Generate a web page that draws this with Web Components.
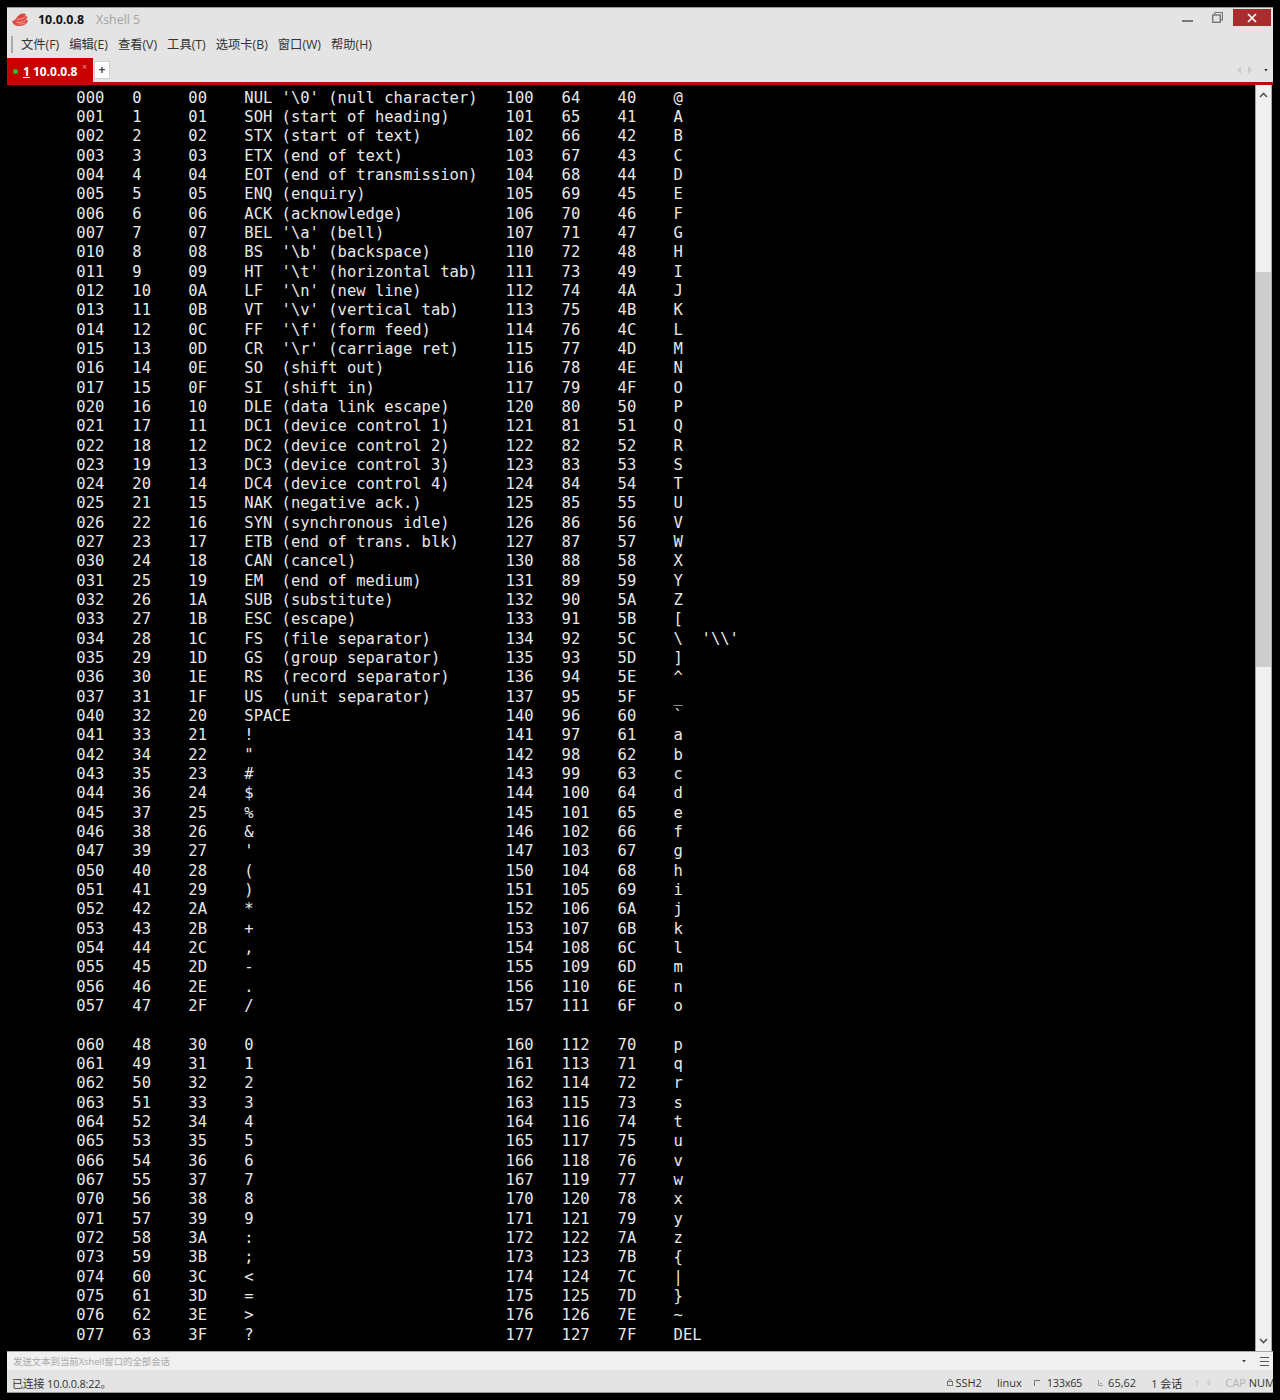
<!DOCTYPE html>
<html>
<head>
<meta charset="utf-8">
<title>10.0.0.8 - Xshell 5</title>
<style>
    html, body { margin: 0; background: #000; }
    body { padding: 7px 7px 0 7px; height: 1400px; box-sizing: border-box; font-family: "Open Sans", "Noto Sans CJK SC", sans-serif; }
</style>
</head>
<body>
<xshell-window>
    <title-bar host="10.0.0.8" app="Xshell 5"></title-bar>
    <menu-bar></menu-bar>
    <tab-bar></tab-bar>
    <term-view></term-view>
    <compose-bar></compose-bar>
    <status-bar></status-bar>
</xshell-window>

<script>
class XshellWindow extends HTMLElement {
    constructor() {
        super();
        this.attachShadow({mode: 'open'}).innerHTML = `
            <style>
                :host {
                    display: flex;
                    flex-direction: column;
                    height: 1386px;
                    width: 1266px;
                    box-sizing: border-box;
                    border-top: 1px solid #9a9a9a;
                    border-bottom: 1px solid #9a9a9a;
                    background: #e4e4e4;
                    overflow: hidden;
                }
            </style>
            <slot></slot>
        `;
    }
}

class TitleBar extends HTMLElement {
    constructor() {
        super();
        this.attachShadow({mode: 'open'});
    }
    connectedCallback() {
        this.shadowRoot.innerHTML = `
            <style>
                :host { display: flex; align-items: flex-start; height: 23px; flex: none; color: #111; }
                .logo { margin: 5px 0 0 5px; width: 16px; height: 13px; flex: none; }
                .host { margin: 3px 0 0 10px; font-size: 12.4px; font-weight: 700; line-height: 18px; }
                .app { margin: 3px 0 0 12px; font-size: 12.4px; color: #a2a2a2; line-height: 18px; }
                .btns { margin-left: auto; display: flex; align-items: flex-start; }
                .min { width: 11px; height: 2px; background: #777; margin: 12px 0 0 0; }
                .restore { margin: 4px 0 0 19px; width: 11px; height: 11px; }
                .close { margin: 1px 2px 0 10px; width: 38px; height: 17px; background: #a92c2f; display: flex; align-items: center; justify-content: center; }
            </style>
            <svg class="logo" viewBox="0 0 16 13">
                <path d="M0 8C3 8 4 5 6 3 8 0 12 0 14 1L13 3 16 4 14 6 16 8C15 11 11 13 7 13 3 13 1 11 0 8z" fill="#dd4a46"/>
                <path d="M5 6c2 1 5 0 8-2M4 9c3 1 7 0 10-2M6 11c2 0 5 0 7-1" stroke="#f4aaa4" stroke-width=".9" fill="none"/>
            </svg>
            <span class="host">${this.getAttribute('host')}</span>
            <span class="app">${this.getAttribute('app')}</span>
            <div class="btns">
                <div class="min"></div>
                <svg class="restore" viewBox="0 0 11 11" fill="none" stroke="#777">
                    <path d="M3 2.5V.5h7.5v7.5h-1.5" stroke-width="1.2"/>
                    <rect x=".7" y="3" width="7.6" height="7.3" stroke-width="1.4"/>
                </svg>
                <div class="close">
                    <svg width="10" height="10" viewBox="0 0 10 10"><path d="M1 1l8 8M9 1l-8 8" stroke="#fff" stroke-width="1.7"/></svg>
                </div>
            </div>
        `;
    }
}

class MenuBar extends HTMLElement {
    constructor() {
        super();
        const items = ['文件(F)', '编辑(E)', '查看(V)', '工具(T)', '选项卡(B)', '窗口(W)', '帮助(H)'];
        this.attachShadow({mode: 'open'}).innerHTML = `
            <style>
                :host { display: flex; align-items: center; height: 26px; flex: none; padding-left: 4px; font-size: 12.3px; color: #333; }
                .grip { width: 2px; height: 17px; background: #aaa; margin-right: 8px; }
                .items { display: flex; gap: 10px; }
            </style>
            <div class="grip"></div>
            <div class="items">${items.map(m => `<span>${m}</span>`).join('')}</div>
        `;
    }
}

class TabBar extends HTMLElement {
    constructor() {
        super();
        this.attachShadow({mode: 'open'}).innerHTML = `
            <style>
                :host { display: flex; height: 28px; flex: none; box-sizing: border-box; border-bottom: 3px solid #c4090d; align-items: flex-end; position: relative; }
                .tab { width: 86px; height: 24px; background: #c80000; color: #fff; display: flex; align-items: center; box-sizing: border-box; padding: 3px 0 0 6px; font-size: 12px; font-weight: 700; position: relative; }
                .dot { width: 5px; height: 5px; border-radius: 50%; background: #22c022; margin-right: 5px; }
                .num { text-decoration: underline; margin-right: 3px; }
                .x { position: absolute; left: 75px; top: 3px; font-size: 9px; font-weight: 400; color: #e09a9a; line-height: 12px; }
                .add { width: 14px; height: 16px; margin: 0 0 3px 1px; background: #fff; border: 1px solid #d2d2d2; color: #444; font-size: 12px; font-weight: 700; display: flex; align-items: center; justify-content: center; line-height: 1; }
                .nav { margin-left: auto; margin-bottom: 8px; display: flex; align-items: center; gap: 7px; padding-right: 5px; }
                .arrow { width: 0; height: 0; border: 4px solid transparent; }
                .l { border-right: 4px solid #cbcbcb; border-left-width: 0; }
                .r { border-left: 4px solid #cbcbcb; border-right-width: 0; }
                .drop { margin-left: 5px; width: 4px; height: 3px; background: #333; clip-path: polygon(0 0, 100% 0, 50% 100%); }
            </style>
            <div class="tab"><span class="dot"></span><span class="num">1</span><span>10.0.0.8</span><span class="x">×</span></div>
            <div class="add">+</div>
            <div class="nav"><span class="arrow l"></span><span class="arrow r"></span><span class="drop"></span></div>
        `;
    }
}

class TermView extends HTMLElement {
    constructor() {
        super();
        const names = ["NUL '\\0' (null character)", "SOH (start of heading)", "STX (start of text)", "ETX (end of text)",
            "EOT (end of transmission)", "ENQ (enquiry)", "ACK (acknowledge)", "BEL '\\a' (bell)", "BS  '\\b' (backspace)",
            "HT  '\\t' (horizontal tab)", "LF  '\\n' (new line)", "VT  '\\v' (vertical tab)", "FF  '\\f' (form feed)",
            "CR  '\\r' (carriage ret)", "SO  (shift out)", "SI  (shift in)", "DLE (data link escape)", "DC1 (device control 1)",
            "DC2 (device control 2)", "DC3 (device control 3)", "DC4 (device control 4)", "NAK (negative ack.)",
            "SYN (synchronous idle)", "ETB (end of trans. blk)", "CAN (cancel)", "EM  (end of medium)", "SUB (substitute)",
            "ESC (escape)", "FS  (file separator)", "GS  (group separator)", "RS  (record separator)", "US  (unit separator)",
            "SPACE"];
        const lines = [];
        for (let i = 0; i < 64; i++) {
            if (i == 48) lines.push('');
            const oct = n => n.toString(8).padStart(3, '0');
            const hex = n => n.toString(16).toUpperCase().padStart(2, '0');
            const j = i + 64;
            const left = names[i] || String.fromCharCode(i);
            let right = String.fromCharCode(j);
            if (j == 92) right = "\\  '\\\\'";
            if (j == 127) right = 'DEL';
            lines.push(' '.repeat(7) + oct(i).padEnd(6) + String(i).padEnd(6) + hex(i).padEnd(6) + left.padEnd(28)
                + oct(j).padEnd(6) + String(j).padEnd(6) + hex(j).padEnd(6) + right);
        }
        const esc = s => s.replace(/&/g, '&amp;').replace(/</g, '&lt;').replace(/>/g, '&gt;');
        this.attachShadow({mode: 'open'}).innerHTML = `
            <style>
                :host { display: flex; flex: 1; min-height: 0; background: #000; }
                pre {
                    flex: 1; margin: 0; padding: 3.6px 0 0 4px; overflow: hidden;
                    font: 15.5px/19.33px "DejaVu Sans Mono", monospace;
                    color: #e8e8e8;
                }
                .bar { width: 17px; margin-right: 1px; flex: none; box-sizing: border-box; border-left: 1px solid #a8a8a8; border-right: 1px solid #a8a8a8; background: #f0f0f0; display: flex; flex-direction: column; }
                .btn { height: 20px; flex: none; display: flex; align-items: center; justify-content: center; }
                .space { flex: none; height: 167px; }
                .thumb { flex: none; height: 395px; background: #cdcdcd; }
                .rest { flex: 1; }
            </style>
            <pre>${esc(lines.join('\n'))}</pre>
            <div class="bar">
                <div class="btn"><svg width="9" height="6" viewBox="0 0 9 6"><path d="M1 5l3.5-3.5L8 5" fill="none" stroke="#555" stroke-width="1.6"/></svg></div>
                <div class="space"></div>
                <div class="thumb"></div>
                <div class="rest"></div>
                <div class="btn"><svg width="9" height="6" viewBox="0 0 9 6"><path d="M1 1l3.5 3.5L8 1" fill="none" stroke="#555" stroke-width="1.6"/></svg></div>
            </div>
        `;
    }
}

class ComposeBar extends HTMLElement {
    constructor() {
        super();
        this.attachShadow({mode: 'open'}).innerHTML = `
            <style>
                :host { display: flex; align-items: center; height: 19px; flex: none; box-sizing: border-box; background: #f0f0f0; border-top: 1px solid #a8a8a8; font-size: 9.4px; color: #a9a9a9; padding-left: 6px; }
                .drop { margin-left: auto; width: 4px; height: 3px; background: #333; clip-path: polygon(0 0, 100% 0, 50% 100%); }
                .menu { margin: 0 4px 0 14px; width: 9px; height: 7px; border-top: 1px solid #555; border-bottom: 1px solid #555; position: relative; }
                .menu::after { content: ''; position: absolute; left: 0; right: 0; top: 3px; height: 1px; background: #555; }
            </style>
            <span>发送文本到当前Xshell窗口的全部会话</span>
            <span class="drop"></span>
            <span class="menu"></span>
        `;
    }
}

class StatusBar extends HTMLElement {
    constructor() {
        super();
        this.attachShadow({mode: 'open'}).innerHTML = `
            <style>
                :host { display: flex; align-items: center; height: 22px; flex: none; box-sizing: border-box; background: #e4e4e4; font-size: 11px; color: #333; padding: 3px 0 0 5px; overflow: hidden; white-space: nowrap; }
                .left { letter-spacing: -0.2px; }
                .right { margin-left: auto; margin-right: -2px; display: flex; align-items: center; }
                .i { display: inline-block; flex: none; }
                .muted { color: #b3b3b3; }
            </style>
            <span class="left">已连接 10.0.0.8:22。</span>
            <div class="right">
                <svg class="i" width="6" height="7" viewBox="0 0 6 7" style="margin-right:2px"><rect x=".5" y="2.5" width="5" height="4" fill="none" stroke="#777"/><path d="M1.5 2.5V1.5a1.5 1 0 0 1 3 0v1" fill="none" stroke="#777"/></svg>
                <span>SSH2</span>
                <span style="margin-left:15px">linux</span>
                <svg class="i" width="6" height="6" viewBox="0 0 6 6" style="margin-left:12px"><path d="M.5 6V.5H6" fill="none" stroke="#777"/><rect x="3" y="0" width="3" height="1" fill="#777"/></svg>
                <span style="margin-left:7px;letter-spacing:-.3px">133x65</span>
                <svg class="i" width="6" height="6" viewBox="0 0 6 6" style="margin-left:15px"><path d="M1.5 0v5.5H6" fill="none" stroke="#999"/><rect x="3" y="3" width="2" height="1" fill="#999"/></svg>
                <span style="margin-left:5px">65,62</span>
                <span style="margin-left:15px">1 会话</span>
                <svg class="i" width="18" height="7" viewBox="0 0 18 7" style="margin-left:12px"><path d="M3 7V2M1 3.5L3 1l2 2.5" stroke="#c8c8c8" fill="none"/><path d="M15 0v5M13 3.5L15 6l2-2.5" stroke="#c8c8c8" fill="none"/></svg>
                <span class="muted" style="margin-left:13px">CAP</span>
                <span style="margin-left:3px">NUM</span>
            </div>
        `;
    }
}

customElements.define('xshell-window', XshellWindow);
customElements.define('title-bar', TitleBar);
customElements.define('menu-bar', MenuBar);
customElements.define('tab-bar', TabBar);
customElements.define('term-view', TermView);
customElements.define('compose-bar', ComposeBar);
customElements.define('status-bar', StatusBar);
</script>
</body>
</html>
